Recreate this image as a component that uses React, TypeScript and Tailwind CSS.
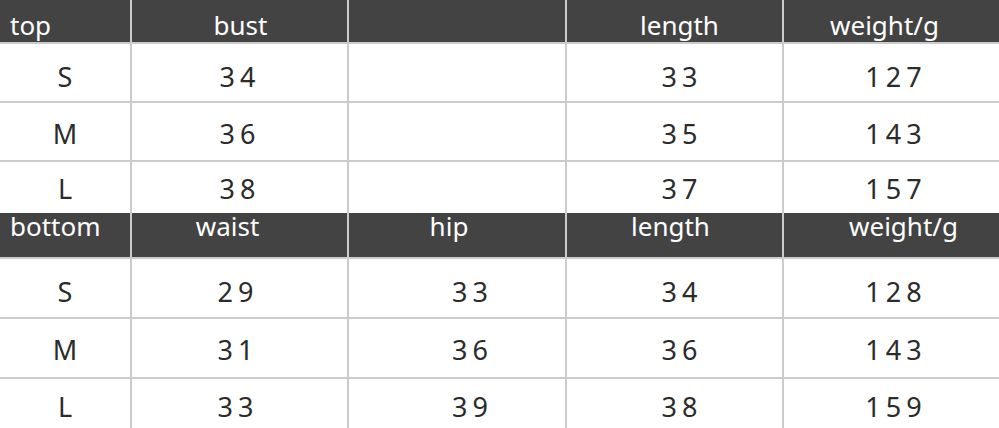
import React from "react";

const grid = "grid grid-cols-[132px_217px_218px_217px_215px]";
const line = "border-[#cbcbcb]";

type Cell = { t: string; c: string };

function HeaderRow({ cells, h, pt }: { cells: Cell[]; h: string; pt: string }) {
  return (
    <div className={`${grid} ${h} bg-[#434343] border-b-2 ${line}`}>
      {cells.map((cell, i) => (
        <div
          key={i}
          className={`${i < 4 ? `border-r-2 ${line}` : ""} ${pt} text-white text-[26px] leading-[26px] whitespace-nowrap ${cell.c}`}
        >
          {cell.t}
        </div>
      ))}
    </div>
  );
}

function BodyRow({ cells, h, pt, last }: { cells: Cell[]; h: string; pt: string; last?: boolean }) {
  return (
    <div className={`${grid} ${h} ${last ? "" : `border-b-2 ${line}`}`}>
      {cells.map((cell, i) => (
        <div
          key={i}
          className={`${i < 4 ? `border-r-2 ${line}` : ""} ${pt} text-center text-[#2b2b2b] text-[27px] leading-[26px] tracking-[5px] whitespace-nowrap ${cell.c}`}
        >
          {cell.t}
        </div>
      ))}
    </div>
  );
}

export default function App() {
  const topHead: Cell[] = [
    { t: "top", c: "text-left pl-[10px]" },
    { t: "bust", c: "text-center pl-[2px]" },
    { t: "", c: "" },
    { t: "length", c: "text-center pl-[10px]" },
    { t: "weight/g", c: "text-center pr-[14px]" },
  ];
  const botHead: Cell[] = [
    { t: "bottom", c: "text-left pl-[10px]" },
    { t: "waist", c: "text-center pr-[24px]" },
    { t: "hip", c: "text-center pr-[16px]" },
    { t: "length", c: "text-center pr-[8px]" },
    { t: "weight/g", c: "text-center pl-[24px]" },
  ];
  const topRows: string[][] = [
    ["S", "34", "", "33", "127"],
    ["M", "36", "", "35", "143"],
    ["L", "38", "", "37", "157"],
  ];
  const botRows: string[][] = [
    ["S", "29", "33", "34", "128"],
    ["M", "31", "36", "36", "143"],
    ["L", "33", "39", "38", "159"],
  ];
  const topPad = ["pl-[5px]", "pl-[1px]", "", "pl-[15px]", "pl-[9px]"];
  const botPad = ["pl-[5px]", "pr-[3px]", "pl-[31px]", "pl-[15px]", "pl-[9px]"];

  const topHeights = ["h-[59px]", "h-[59px]", "h-[51px]"];
  const topPts = ["pt-[20px]", "pt-[18px]", "pt-[14px]"];
  const botHeights = ["h-[60px]", "h-[60px]", "h-[49px]"];
  const botPts = ["pt-[20px]", "pt-[18px]", "pt-[15px]"];

  return (
    <div className="w-[999px] h-[428px] overflow-hidden bg-white font-['Noto_Sans','Open_Sans',sans-serif]">
      <HeaderRow cells={topHead} h="h-[44px]" pt="pt-[12px]" />
      {topRows.map((r, ri) => (
        <BodyRow
          key={ri}
          h={topHeights[ri]}
          pt={topPts[ri]}
          last={ri === 2}
          cells={r.map((t, i) => ({ t, c: topPad[i] }))}
        />
      ))}
      <HeaderRow cells={botHead} h="h-[46px]" pt="pt-0" />
      {botRows.map((r, ri) => (
        <BodyRow
          key={ri}
          h={botHeights[ri]}
          pt={botPts[ri]}
          last={ri === 2}
          cells={r.map((t, i) => ({ t, c: botPad[i] }))}
        />
      ))}
    </div>
  );
}
